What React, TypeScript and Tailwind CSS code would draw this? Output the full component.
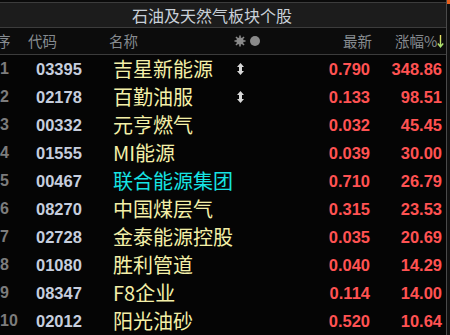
import React from "react";

const rows = [
  ["1", "03395", "吉星新能源", true, "0.790", "348.86", false],
  ["2", "02178", "百勤油服", true, "0.133", "98.51", false],
  ["3", "00332", "元亨燃气", false, "0.032", "45.45", false],
  ["4", "01555", "MI能源", false, "0.039", "30.00", false],
  ["5", "00467", "联合能源集团", false, "0.710", "26.79", true],
  ["6", "08270", "中国煤层气", false, "0.315", "23.53", false],
  ["7", "02728", "金泰能源控股", false, "0.035", "20.69", false],
  ["8", "01080", "胜利管道", false, "0.040", "14.29", false],
  ["9", "08347", "F8企业", false, "0.114", "14.00", false],
  ["10", "02012", "阳光油砂", false, "0.520", "10.64", false],
] as const;

const cjk = { fontFamily: '"Noto Sans CJK SC", "Noto Sans", sans-serif' };
const num = { fontFamily: '"Liberation Sans", Arial, sans-serif' };

function UpDown() {
  return (
    <svg width="7" height="12" viewBox="0 0 7 12">
      <path d="M3.5 0 L7 4 L5 4 L5 8 L7 8 L3.5 12 L0 8 L2 8 L2 4 L0 4 Z" fill="#d8d8d8" />
    </svg>
  );
}

function Gear() {
  return (
    <svg width="12" height="12" viewBox="0 0 12 12">
      <g stroke="#8a8a8a" strokeWidth="1.6">
        <line x1="6" y1="0.5" x2="6" y2="11.5" />
        <line x1="0.5" y1="6" x2="11.5" y2="6" />
        <line x1="2" y1="2" x2="10" y2="10" />
        <line x1="10" y1="2" x2="2" y2="10" />
      </g>
      <circle cx="6" cy="6" r="3.6" fill="#8a8a8a" />
    </svg>
  );
}

export default function App() {
  return (
    <div className="w-[450px] h-[335px] overflow-hidden bg-[#050505] flex" style={cjk}>
      <div className="w-[446px] flex flex-col">
        <div className="h-[2px] bg-[#0a0a0a]" />
        <div className="h-[1px] bg-[#3c3c3c]" />
        <div className="h-[24px] bg-[#1c1c1c] flex items-center justify-center pr-[22px] text-[16px] text-[#c9d0d8]">
          石油及天然气板块个股
        </div>
        <div className="h-[1px] bg-[#3c3c3c]" />
        <div className="h-[27px] bg-[#0c0c0c] flex items-center text-[14.5px] text-[#868b90]">
          <div className="w-[28px] -ml-[4px] pl-0">序</div>
          <div className="w-[85px] pl-[4px]">代码</div>
          <div className="w-[125px]">名称</div>
          <div className="w-[40px] flex items-center gap-[4px]">
            <Gear />
            <span className="w-[10px] h-[10px] rounded-full bg-[#8a8a8a]" />
          </div>
          <div className="w-[69px]" />
          <div className="w-[52px]">最新</div>
          <div className="flex items-center">
            涨幅%
            <svg width="7" height="14" viewBox="0 0 7 14">
              <defs>
                <linearGradient id="ag" x1="0" y1="0" x2="0" y2="1">
                  <stop offset="0" stopColor="#f0e060" />
                  <stop offset="1" stopColor="#a0e070" />
                </linearGradient>
              </defs>
              <path d="M3.5 1 L3.5 12.5 M0.8 9.5 L3.5 12.8 L6.2 9.5" stroke="url(#ag)" strokeWidth="1.4" fill="none" />
            </svg>
          </div>
        </div>
        <div className="h-[1px] bg-[#3c3c3c]" />
        <div className="flex flex-col">
          {rows.map(([idx, code, name, arrow, price, pct, cyan]) => (
            <div key={idx} className="h-[28px] flex items-center">
              <div className="w-[36px] text-[16px] font-bold text-[#7c7c7c]" style={num}>
                {idx}
              </div>
              <div className="w-[77px] text-[16.5px] font-bold text-[#c6cede]" style={num}>
                {code}
              </div>
              <div
                className={`w-[121px] text-[20px] whitespace-nowrap overflow-hidden ${cyan ? "text-[#16e4e4]" : "text-[#f4f0a8]"}`}
              >
                {name}
              </div>
              <div className="w-[20px] flex pl-[3px]">{arrow ? <UpDown /> : null}</div>
              <div className="w-[116px] text-right text-[16.5px] font-bold text-[#ff5252]" style={num}>
                {price}
              </div>
              <div className="w-[72px] text-right text-[16.5px] font-bold text-[#ff5252]" style={num}>
                {pct}
              </div>
            </div>
          ))}
        </div>
      </div>
      <div className="w-[1px] bg-[#4a4a4a]" />
      <div className="flex-1 bg-[#111111] flex flex-col">
        <div className="h-[4px] bg-[#e8601c]" />
      </div>
    </div>
  );
}
